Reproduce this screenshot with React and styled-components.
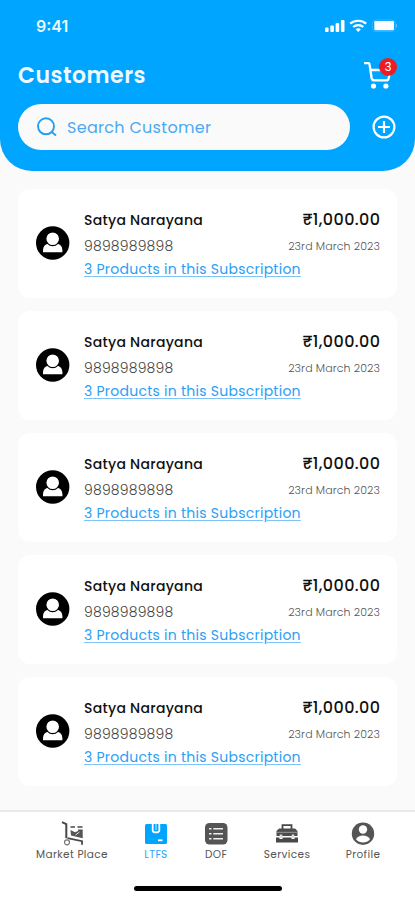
import React from "react";
import styled, { createGlobalStyle } from "styled-components";

const GlobalStyle = createGlobalStyle`
  * { box-sizing: border-box; }
  body {
    margin: 0;
    background: #fafafa;
    font-family: Poppins, Inter, "Noto Sans", sans-serif;
  }
`;

const Screen = styled.div`
  width: 415px;
  height: 900px;
  display: flex;
  flex-direction: column;
  background: #fafafa;
  overflow: hidden;
`;

const Header = styled.header`
  height: 171px;
  flex: none;
  padding: 0 18px;
  background: #00a5ff;
  border-radius: 0 0 32px 32px;
  color: #fff;
`;

const StatusBar = styled.div`
  height: 52px;
  padding: 0 0 0 18px;
  display: flex;
  align-items: center;
  justify-content: space-between;
`;

const Time = styled.span`
  font-family: Inter, sans-serif;
  font-size: 16px;
  font-weight: 600;
  color: #e9f7ff;
`;

const TitleRow = styled.div`
  height: 46px;
  display: flex;
  align-items: center;
  justify-content: space-between;
`;

const Title = styled.h1`
  margin: 0;
  font-size: 22px;
  font-weight: 600;
  letter-spacing: 0.5px;
  color: #eef9ff;
`;

const CartButton = styled.div`
  position: relative;
  width: 33px;
  height: 30px;
`;

const Badge = styled.span`
  position: absolute;
  top: -2px;
  right: 0;
  width: 18px;
  height: 18px;
  border-radius: 50%;
  background: #ec1c24;
  font-size: 12px;
  line-height: 18px;
  text-align: center;
`;

const SearchRow = styled.div`
  margin-top: 6px;
  display: flex;
  align-items: center;
  gap: 22px;
`;

const SearchBox = styled.div`
  width: 332px;
  height: 46px;
  padding-left: 18px;
  display: flex;
  align-items: center;
  gap: 9px;
  border-radius: 23px;
  background: #fafafa;
  color: #4ba9f3;
  font-size: 16px;
  letter-spacing: 0.3px;
`;

const List = styled.main`
  flex: 1;
  padding: 18px 18px 0;
  display: flex;
  flex-direction: column;
  gap: 13px;
`;

const Card = styled.article`
  height: 109px;
  flex: none;
  padding: 0 17px 0 18px;
  display: flex;
  align-items: center;
  border-radius: 12px;
  background: #fff;
`;

const Details = styled.div`
  width: 218px;
  margin-left: 14px;
  white-space: nowrap;
`;

const Name = styled.div`
  font-size: 14px;
  font-weight: 500;
  line-height: 26px;
  letter-spacing: 0.28px;
  color: #111;
`;

const Phone = styled.div`
  font-size: 14px;
  font-weight: 300;
  line-height: 24px;
  padding-top: 1px;
  letter-spacing: 0.2px;
  color: #444;
`;

const Subscription = styled.div`
  font-size: 14px;
  line-height: 24px;
  margin-top: -1px;
  letter-spacing: 0.25px;
  color: #2ba0f5;
  text-decoration: underline;
  text-decoration-color: #7cc4fa;
  text-underline-offset: 2px;
`;

const Payment = styled.div`
  width: 92px;
  height: 74px;
  margin-left: -14px;
  text-align: right;
  white-space: nowrap;
`;

const Amount = styled.div`
  font-size: 16px;
  font-weight: 500;
  line-height: 26px;
  letter-spacing: 0.4px;
  margin-right: -0.4px;
  color: #111;
`;

const DateText = styled.div`
  font-size: 11px;
  font-weight: 300;
  line-height: 24px;
  padding-top: 1px;
  letter-spacing: 0.1px;
  color: #555;
`;

const Footer = styled.footer`
  height: 90px;
  flex: none;
  border-top: 2px solid #e9e9e9;
  background: #fff;
`;

const Nav = styled.nav`
  height: 74px;
  padding: 8px 35px 0 36px;
  display: flex;
  justify-content: space-between;
`;

const NavItem = styled.div`
  width: ${p => p.$width}px;
  display: flex;
  flex-direction: column;
  align-items: center;
  gap: 2px;
  white-space: nowrap;
  font-size: 10.5px;
  line-height: 14px;
  letter-spacing: 0.4px;
  color: ${p => (p.$active ? "#2aa6f7" : "#555")};
`;

const HomeIndicator = styled.div`
  width: 148px;
  height: 5px;
  margin: 0 auto;
  border-radius: 3px;
  background: #000;
`;

const StatusIcons = () => (
  <svg width="72" height="14" viewBox="0 0 72 14" fill="#fff">
    <rect x="0" y="8.500" width="3.600" height="4.500" rx="1" />
    <rect x="5.300" y="6.500" width="3.600" height="6.500" rx="1" />
    <rect x="10.600" y="4" width="3.600" height="9" rx="1" />
    <rect x="15.900" y="1" width="3.600" height="12" rx="1" />
    <g fill="none" stroke="#fff" strokeWidth="2.200">
      <path d="M25.200 4.600c4.500-3.800 11.500-3.800 16 0" />
      <path d="M28.200 8c2.900-2.600 7.200-2.600 10.100 0" />
    </g>
    <path d="M30.600 10.200c1.500-1.300 3.800-1.300 5.300 0L33.200 13z" />
    <rect x="47.200" y=".9" width="23.200" height="11.600" rx="3.500" fill="none" stroke="#fff" strokeOpacity=".18" />
    <rect x="49.300" y="2" width="19.700" height="9.300" rx="1.300" />
    <path d="M71 4.800v4c1.200-.7 1.200-3.300 0-4z" opacity=".45" />
  </svg>
);

const CartIcon = () => (
  <svg width="33" height="30" viewBox="0 0 33 30">
    <path d="M0 3.200h4.200c.9 0 1.300.4 1.400 1.300l2 13.500c.3 1.600 1 2.400 2.600 2.400h12c1.400 0 2.100-.7 2.400-2L26.500 10H7" fill="none" stroke="#fff" strokeWidth="2.300" />
    <circle cx="9.500" cy="26" r="2.600" fill="#fff" />
    <circle cx="21.900" cy="26" r="2.600" fill="#fff" />
  </svg>
);

const SearchIcon = () => (
  <svg width="22" height="22" viewBox="0 0 22 22" fill="none" stroke="#259ff2" strokeWidth="1.900">
    <circle cx="10" cy="10.300" r="8" />
    <path d="M15.700 16l4.300 3.600" />
  </svg>
);

const PlusIcon = () => (
  <svg width="24" height="24" viewBox="0 0 24 24" fill="none" stroke="#fff" strokeWidth="2.200">
    <circle cx="12" cy="12" r="10.400" />
    <path d="M12 6v12M6 12h12" />
  </svg>
);

const AvatarIcon = styled.svg`
  flex: none;
  margin-top: -2px;
`;

const Avatar = () => (
  <AvatarIcon width="34" height="34" viewBox="0 0 34 34">
    <circle cx="16.700" cy="17" r="16.700" fill="#000" />
    <path d="M7 26.300v-2c0-3.600 2-6 5.200-6.800h9c3.200.8 5.200 3.200 5.200 6.800v2z" fill="#fff" />
    <circle cx="16.700" cy="12.800" r="6.900" fill="#fff" stroke="#000" strokeWidth="1.200" />
  </AvatarIcon>
);

const MarketIcon = () => (
  <svg width="24" height="26" viewBox="0 0 24 26" fill="none" stroke="#484848">
    <path d="M2 2.200l4.300 2v14" strokeWidth="2" />
    <path d="M7.500 18.200l14.500 3v3.500" strokeWidth="1.800" />
    <circle cx="7" cy="22.300" r="2.500" strokeWidth="1.200" stroke="#777" />
    <path d="M10.500 7h4.500M17.500 7h5" strokeWidth="1.600" />
    <path d="M10.500 10l4.500 2.300 3-1.300V9.500h4.700v8.700L11 15.500z" fill="#555" stroke="none" />
    <path d="M15.500 15l4-3" stroke="#ddd" />
  </svg>
);

const LtfsIcon = () => (
  <svg width="24" height="26" viewBox="0 0 24 26">
    <rect x="1" y="4" width="22" height="20" rx="1.500" fill="#00a5ff" />
    <path d="M8.700 4v6.500c0 2.600 6.600 2.600 6.600 0V4" fill="#00a5ff" stroke="#fff" strokeWidth="1.800" />
    <path d="M12 4v6" stroke="#c9ecff" strokeWidth="1" />
    <path d="M14 20.300h4.500" stroke="#fff" strokeWidth="1.800" />
  </svg>
);

const DofIcon = () => (
  <svg width="24" height="26" viewBox="0 0 24 26">
    <rect x="1" y="3" width="22.500" height="21.500" rx="4.500" fill="#555" />
    <path d="M5 8.800h2.500M5 13.800h2.500M5 18.800h2.500M9.300 8.800H19M9.300 13.800H19M9.300 18.800H19" stroke="#eee" strokeWidth="1.600" />
  </svg>
);

const ServicesIcon = () => (
  <svg width="24" height="26" viewBox="0 0 24 26">
    <path d="M7.500 9V5.200h9V9" fill="none" stroke="#484848" strokeWidth="1.800" />
    <path d="M4 8.500h16l2.500 2.500v5h-21v-5z" fill="#4c4c4c" />
    <path d="M1.500 12.300h21" stroke="#999" strokeWidth="1" />
    <path d="M1 17.500h3.500V19h3v-1.500h9V19h3v-1.500H23v5H1z" fill="#484848" />
    <path d="M4.700 14.500h2.600v3.700H4.700zM16.700 14.500h2.600v3.700h-2.600z" fill="#ddd" />
  </svg>
);

const ProfileIcon = () => (
  <svg width="24" height="26" viewBox="0 0 24 26">
    <circle cx="12" cy="13.700" r="11.200" fill="#555" />
    <circle cx="12" cy="9.500" r="4.200" fill="#fff" />
    <path d="M5 19.300c1.200-2.400 4-3.700 7-3.700s5.800 1.300 7 3.700c-3.300 4.300-10.700 4.300-14 0z" fill="#fff" />
  </svg>
);

const customers = Array.from({ length: 5 }, (_, id) => ({
  id,
  name: "Satya Narayana",
  phone: "9898989898",
  products: 3,
  amount: "₹1,000.00",
  date: "23rd March 2023"
}));

const tabs = [
  { label: "Market Place", Icon: MarketIcon, width: 72 },
  { label: "LTFS", Icon: LtfsIcon, width: 24 },
  { label: "DOF", Icon: DofIcon, width: 24 },
  { label: "Services", Icon: ServicesIcon, width: 46 },
  { label: "Profile", Icon: ProfileIcon, width: 34 }
];

export default function App() {
  return (
    <>
      <GlobalStyle />
      <Screen>
        <Header>
          <StatusBar>
            <Time>9:41</Time>
            <StatusIcons />
          </StatusBar>
          <TitleRow>
            <Title>Customers</Title>
            <CartButton>
              <CartIcon />
              <Badge>3</Badge>
            </CartButton>
          </TitleRow>
          <SearchRow>
            <SearchBox>
              <SearchIcon />
              Search Customer
            </SearchBox>
            <PlusIcon />
          </SearchRow>
        </Header>

        <List>
          {customers.map(c => (
            <Card key={c.id}>
              <Avatar />
              <Details>
                <Name>{c.name}</Name>
                <Phone>{c.phone}</Phone>
                <Subscription>{c.products} Products in this Subscription</Subscription>
              </Details>
              <Payment>
                <Amount>{c.amount}</Amount>
                <DateText>{c.date}</DateText>
              </Payment>
            </Card>
          ))}
        </List>

        <Footer>
          <Nav>
            {tabs.map(({ label, Icon, width }) => (
              <NavItem key={label} $width={width} $active={label === "LTFS"}>
                <Icon />
                {label}
              </NavItem>
            ))}
          </Nav>
          <HomeIndicator />
        </Footer>
      </Screen>
    </>
  );
}
